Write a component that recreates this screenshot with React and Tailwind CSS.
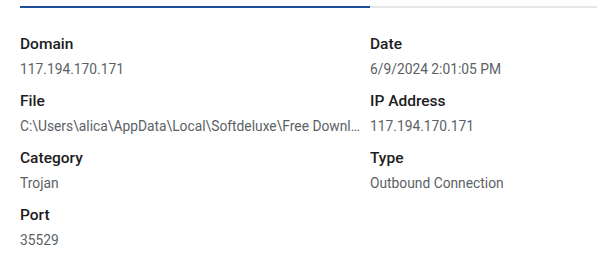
const rows = [
  [
    { label: "Domain", value: "117.194.170.171" },
    { label: "Date", value: "6/9/2024 2:01:05 PM" },
  ],
  [
    {
      label: "File",
      value:
        "C:\\Users\\alica\\AppData\\Local\\Softdeluxe\\Free Download Manager\\fdm.exe",
    },
    { label: "IP Address", value: "117.194.170.171" },
  ],
  [
    { label: "Category", value: "Trojan" },
    { label: "Type", value: "Outbound Connection" },
  ],
  [{ label: "Port", value: "35529" }, null],
];

function Field({ item }) {
  if (!item) return <div />;
  return (
    <div className="min-w-0 pr-[6px]">
      <div className="text-[15.5px] font-medium leading-5 text-[#1c1c1e]">{item.label}</div>
      <div className="mt-[5px] truncate text-[13.8px] leading-5 text-[#5b5f66]">{item.value}</div>
    </div>
  );
}

export default function App() {
  return (
    <div className="h-[277px] w-[602px] bg-white pl-5 pr-[5px] pt-[6px]" style={{ fontFamily: "Roboto, 'Liberation Sans', sans-serif" }}>
      <div className="grid grid-cols-[350px_1fr]">
        <div className="h-[2px] bg-[#1e4d9a]" />
        <div className="h-[2px] bg-[#e6e6e6]" />
      </div>
      <div className="mt-[26px] grid grid-cols-[350px_1fr] gap-y-[12px]">
        {rows.map((row, i) => (
          <div key={i} className="contents">
            <Field item={row[0]} />
            <Field item={row[1]} />
          </div>
        ))}
      </div>
    </div>
  );
}
